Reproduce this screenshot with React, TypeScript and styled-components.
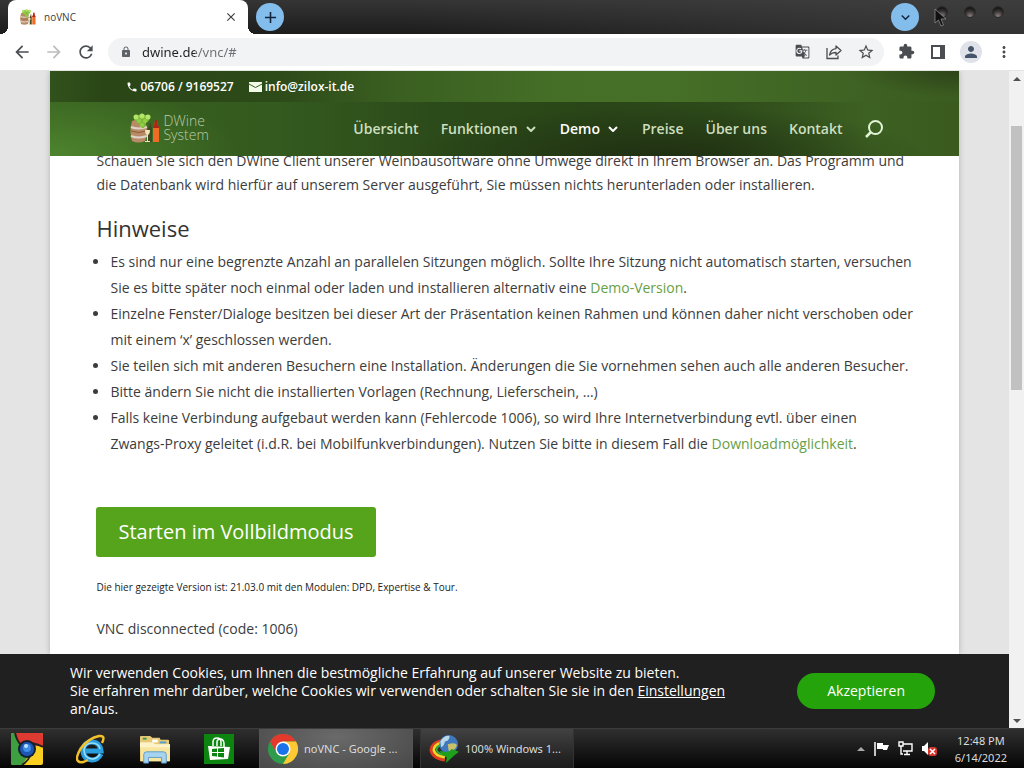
import React from "react";
import styled, { createGlobalStyle } from "styled-components";
import {
  MdArrowBack,
  MdArrowForward,
  MdRefresh,
  MdLock,
  MdGTranslate,
  MdStarBorder,
  MdExtension,
  MdPerson,
  MdMoreVert,
  MdClose,
  MdAdd,
  MdExpandMore,
  MdPhone,
} from "react-icons/md";

const GlobalStyle = createGlobalStyle`
  *, *::before, *::after { box-sizing: border-box; }
  body { margin: 0; font-family: "Open Sans", "Noto Sans", sans-serif; font-size: 14px; color: #3c3c3c; }
  button, input { font: inherit; color: inherit; }
  button { border: 0; background: none; padding: 0; cursor: pointer; }
  svg { display: block; flex: none; }
`;

const Screen = styled.div`
  display: flex;
  flex-direction: column;
  height: 100vh;
  overflow: hidden;
`;

/* ---------- Browser window ---------- */

const TitleBar = styled.div`
  display: flex;
  align-items: center;
  height: 34px;
  flex: none;
  padding: 0 8px;
  background: linear-gradient(90deg, transparent 40%, rgba(66, 66, 66, 0.6) 90%), linear-gradient(#353535, #1c1c1c);
`;

const Tab = styled.div`
  position: relative;
  display: flex;
  align-items: center;
  gap: 8px;
  align-self: stretch;
  width: 240px;
  padding: 0 10px 0 12px;
  border-radius: 8px 8px 0 0;
  background: #fff;
  color: #3c4043;
  font-size: 10px;

  &::before,
  &::after {
    content: "";
    position: absolute;
    bottom: 0;
    width: 8px;
    height: 8px;
  }
  &::before {
    right: 100%;
    background: radial-gradient(circle at 0 0, transparent 8px, #fff 8px);
  }
  &::after {
    left: 100%;
    background: radial-gradient(circle at 100% 0, transparent 8px, #fff 8px);
  }
`;

const TabTitle = styled.span`
  flex: 1;
`;

const RoundButton = styled.button`
  display: grid;
  place-items: center;
  width: 28px;
  height: 28px;
  margin-left: 8px;
  border-radius: 50%;
  background: #83bdec;
  color: #12233a;
`;

const WindowControls = styled.div`
  display: flex;
  margin-left: auto;
`;

const WindowDots = styled.div`
  position: relative;
  display: flex;
  align-self: flex-start;
  gap: 16px;
  margin: 6px 12px 0 17px;
`;

const WindowDot = styled.button`
  width: 12px;
  height: 12px;
  border-radius: 50%;
  border: 1px solid #2b2b2b;
  background: radial-gradient(circle at 50% 90%, #8a7f7f, #3b3737 45%, #1a1a1a 75%);
`;

const Pointer = styled.svg`
  position: absolute;
  left: -2px;
  top: 2px;
`;

const Toolbar = styled.div`
  display: flex;
  align-items: center;
  flex: none;
  height: 37px;
  padding: 0 10px 1px 12px;
  gap: 12px;
  background: #fff;
  border-bottom: 1px solid #e3e5e3;
`;

const IconButton = styled.button<{ $faded?: boolean }>`
  display: grid;
  place-items: center;
  width: 20px;
  height: 20px;
  color: ${(p) => (p.$faded ? "#bdbdbd" : "#4a4d51")};
`;

const AddressBar = styled.label`
  display: flex;
  align-items: center;
  flex: 1;
  height: 28px;
  gap: 10px;
  padding: 0 8px 0 12px;
  border-radius: 14px;
  background: #f1f3f4;
  color: #5f6368;
`;

const AddressInput = styled.input`
  flex: 1;
  min-width: 0;
  padding: 0;
  border: 0;
  outline: 0;
  font-family: "Noto Sans", sans-serif;
  font-size: 13px;
  color: transparent;
  background: linear-gradient(90deg, #202124 53px, #6b6f74 53px);
  background-clip: text;
  -webkit-background-clip: text;
`;

const ToolbarActions = styled.div`
  display: flex;
  align-items: center;
  gap: 12px;
`;

const Avatar = styled.button`
  display: grid;
  place-items: center;
  width: 22px;
  height: 22px;
  border-radius: 50%;
  background: #dfe2e8;
  color: #44546a;
`;

const Viewport = styled.div`
  display: flex;
  flex: 1;
  min-height: 0;
`;

const PageColumn = styled.div`
  display: flex;
  flex-direction: column;
  flex: 1;
  min-width: 0;
`;

const PageBackground = styled.div`
  flex: 1;
  min-height: 0;
  display: flex;
  justify-content: center;
  background: #e4e4e4;
  overflow: hidden;
`;

const Site = styled.div`
  display: flex;
  flex-direction: column;
  width: 90%;
  background: #fff;
  box-shadow: 0 0 6px rgba(0, 0, 0, 0.22);
`;

const ScrollTrack = styled.div`
  display: flex;
  flex-direction: column;
  width: 15px;
  flex: none;
  background: #f1f1f1;
`;

const ScrollArrow = styled.button`
  display: grid;
  place-items: center;
  height: 15px;
  flex: none;
`;

const ScrollRun = styled.div`
  flex: 1;
  padding: 40px 2px 0;
`;

const ScrollThumb = styled.div`
  height: 45%;
  background: #c1c1c1;
`;

/* ---------- Website ---------- */

const SiteHeader = styled.header`
  flex: none;
  color: #fff;
`;

const TopBar = styled.div`
  display: flex;
  align-items: center;
  gap: 15px;
  height: 31px;
  padding: 0 76px;
  font-size: 12px;
  font-weight: 600;
  background:
    radial-gradient(ellipse 110px 26px at 100% 0%, rgba(40, 58, 22, 0.7), transparent),
    linear-gradient(90deg, #31521c 0%, #2a4516 6%, #2d4a19 25%, #3a5f21 38%, #456f27 56%, #466f27 68%, #3f6424 85%, #3b5c20 100%);
`;

const ContactLink = styled.a`
  display: flex;
  align-items: center;
  gap: 2px;
  color: #fff;
  text-decoration: none;
`;

const NavBar = styled.div`
  display: flex;
  align-items: center;
  justify-content: space-between;
  height: 54px;
  padding: 0 76px 2px 80px;
  background:
    radial-gradient(ellipse 190px 70px at 0% 100%, rgba(86, 146, 52, 0.7), transparent),
    radial-gradient(ellipse 260px 50px at 68% 100%, rgba(28, 40, 16, 0.75), transparent),
    linear-gradient(90deg, #39621f 0%, #345a1f 25%, #2c4b1a 42%, #2a4618 60%, #2d4a1a 74%, #3d6122 90%, #3a5a1e 100%);
`;

const Logo = styled.a`
  display: flex;
  align-items: center;
  gap: 3px;
  color: #b9cbaa;
  font-size: 14px;
  font-weight: 300;
  line-height: 14px;
  text-decoration: none;
`;

const Nav = styled.nav`
  display: flex;
  align-items: center;
  gap: 22px;
`;

const NavLink = styled.a<{ $active?: boolean }>`
  display: flex;
  align-items: center;
  gap: 8px;
  color: ${(p) => (p.$active ? "#ffffff" : "#ccdfbf")};
  font-weight: 600;
  text-decoration: none;
`;

const SearchButton = styled.button`
  padding-top: 2px;
  color: #e2f3d6;
`;

const Article = styled.main`
  flex: 1;
  min-height: 0;
  overflow: hidden;
  padding: 0 44px 0 46px;
`;

const Intro = styled.p`
  margin: -7px 0 0;
  line-height: 24px;
`;

const Heading = styled.h2`
  margin: 19px 0 9px;
  color: #333;
  font-size: 22px;
  font-weight: 400;
  line-height: 24px;
`;

const Hints = styled.ul`
  margin: 0 0 50px;
  padding-left: 14px;
  line-height: 26px;
`;

const Unbroken = styled.span`
  white-space: nowrap;
`;

const TextLink = styled.a`
  color: #68a046;
  text-decoration: none;
`;

const StartButton = styled.button`
  display: block;
  height: 50px;
  padding: 0 22px 2px;
  border-radius: 3px;
  background: #56a31c;
  color: #fff;
  font-size: 20px;
`;

const VersionNote = styled.p`
  margin: 20px 0;
  color: #222;
  font-size: 10px;
  line-height: 20px;
`;

const Status = styled.p`
  margin: 0;
  line-height: 24px;
`;

const CookieBar = styled.section`
  display: flex;
  align-items: center;
  flex: none;
  gap: 62px;
  padding: 10px 74px 10px 70px;
  background: #202020;
  color: #fff;
`;

const CookieText = styled.p`
  flex: 1;
  margin: 0;
  line-height: 18px;
`;

const CookieLink = styled.a`
  color: inherit;
`;

const AcceptButton = styled.button`
  height: 36px;
  padding: 0 30px 2px;
  border-radius: 18px;
  background: #24a30a;
  color: #fff;
`;

/* ---------- Windows taskbar ---------- */

const Taskbar = styled.footer`
  display: flex;
  align-items: stretch;
  flex: none;
  height: 40px;
  border-top: 1px solid #3c3c3c;
  background: linear-gradient(#2f2f2f, #161616 60%, #050505);
  color: #dcdcdc;
  font-family: "Noto Sans", sans-serif;
  font-size: 11px;
`;

const Launchers = styled.div`
  display: flex;
  align-items: center;
  gap: 33px;
  padding: 0 25px 0 11px;
`;

const TaskButton = styled.button<{ $active?: boolean }>`
  display: flex;
  align-items: center;
  gap: 6px;
  width: 154px;
  margin-right: 7px;
  padding: 0 8px;
  border: 1px solid ${(p) => (p.$active ? "#555" : "#333")};
  border-width: 0 1px;
  background: ${(p) =>
    p.$active
      ? "radial-gradient(ellipse at 50% 20%, #6a6a6a, #484848)"
      : "linear-gradient(#424242, #252525 70%, #1c1c1c)"};
  white-space: nowrap;
`;

const Tray = styled.div`
  display: flex;
  align-items: center;
  gap: 9px;
  margin-left: auto;
  padding-right: 17px;
`;

const TrayButton = styled.button`
  display: block;
`;

const Clock = styled.time`
  margin-left: 9px;
  line-height: 17px;
  text-align: center;
`;

/* ---------- Drawings ---------- */

const WineLogo = ({ size }: { size: number }) => (
  <svg width={size} height={size} viewBox="0 0 30 30" aria-hidden="true">
    <path d="M2 8Q8 5 15 8Q19 18 15 28Q8 31 2 28Q-1 18 2 8Z" fill="#b98a66" />
    <path d="M1 14Q8 17 17 14M1 23Q8 26 17 23" fill="none" stroke="#ddd3c8" strokeWidth="2" />
    <path d="M1 18Q8 21 17 18" fill="none" stroke="#8d5a3a" />
    <path d="M4 3Q11 0 20 3Q20 8 16 10Q15 16 12 15Q9 13 8 10Q4 8 4 5Z" fill="#7cb83a" />
    <g fill="#b4e468">
      <circle cx="6" cy="4" r="2.500" />
      <circle cx="12" cy="3" r="2.500" />
      <circle cx="18" cy="4" r="2.500" />
    </g>
    <g fill="#93cf45">
      <circle cx="9" cy="8" r="2" />
      <circle cx="15" cy="8" r="2" />
      <circle cx="12" cy="12" r="2" />
    </g>
    <path d="M18 15Q20 14 20 10H21Q21 14 22 15V29H18Z" fill="#3e4a1f" />
    <path d="M15 17H20Q20 21 18 22V28H20V29H15V28H17V22Q15 21 15 17Z" fill="#efe6b8" />
    <path d="M23 29V14Q25 12 25 7H27Q27 12 29 14V29Z" fill="#ee6c24" />
    <path d="M23 15V14Q25 12 25 7H27Q27 12 29 14V15Z" fill="#b02418" />
  </svg>
);

const ShareIcon = () => (
  <svg width="18" height="18" viewBox="0 0 18 18" fill="none" stroke="currentColor" strokeWidth="1.300" aria-hidden="true">
    <path d="M2 5V15.500H13V12.500" />
    <path d="M11 3L16 7.500L11 12V9.500Q7 9.300 4.500 12Q5.500 6.300 11 5.600Z" strokeLinejoin="round" />
  </svg>
);

const SidePanelIcon = () => (
  <svg width="14" height="14" viewBox="0 0 14 14" aria-hidden="true">
    <path fillRule="evenodd" d="M0 0H14V14H0ZM2 2V12H9V2Z" fill="currentColor" />
  </svg>
);

const EnvelopeIcon = () => (
  <svg width="14" height="10" viewBox="0 0 14 10" aria-hidden="true">
    <path d="M0 0H13V10H0Z" fill="#f2fae9" />
    <path d="M0 2L6.500 5.500L13 2" fill="none" stroke="#3a5a26" strokeWidth="1" />
  </svg>
);

const ChevronIcon = () => (
  <svg width="12" height="8" viewBox="0 0 12 8" fill="none" stroke="currentColor" strokeWidth="2" aria-hidden="true">
    <path d="M1 3L5 7L9 3" />
  </svg>
);

const SearchIcon = () => (
  <svg width="18" height="18" viewBox="0 0 18 18" fill="none" stroke="currentColor" aria-hidden="true">
    <circle cx="10.500" cy="7.500" r="6.500" strokeWidth="2" />
    <path d="M6 12L1 17" strokeWidth="2.500" />
  </svg>
);

const OldChromeIcon = () => (
  <svg width="32" height="32" viewBox="0 0 32 32" aria-hidden="true">
    <rect width="32" height="32" rx="2" fill="#f9cf22" />
    <path d="M5 0H30Q32 0 32 2V13H20L10 14L3 2Z" fill="#dd3a31" />
    <path d="M0 2Q0 0 2 0H4Q7 8 10 16L18 22L11 32H2Q0 32 0 30Z" fill="#3f9e3f" />
    <path d="M4 0Q6 8 10 12M32 14Q27 11 20 10M11 32Q17 28 19 23" fill="none" stroke="#222" strokeWidth="2" />
    <circle cx="16" cy="16" r="9" fill="#14202f" />
    <circle cx="16" cy="16" r="7" fill="#1c56b4" />
    <circle cx="16" cy="15" r="4" fill="#3f8ee6" />
    <circle cx="15" cy="13" r="2" fill="#bfe2ff" />
  </svg>
);

const ExplorerIcon = () => (
  <svg width="30" height="30" viewBox="0 0 30 30" fill="none" aria-hidden="true">
    <path d="M25 20Q22 26 16 26Q7 25 7 16Q8 8 16 8Q24 8 25 17H8" stroke="#2a9fe0" strokeWidth="5" />
    <path d="M24 20Q21 25 16 25Q8 24 8 16Q9 9 16 9Q23 9 24 15" stroke="#9be0fb" strokeWidth="1.500" />
    <path d="M26 9Q30 1 23 2Q13 4 5 14Q-1 24 2 27Q5 30 12 26" stroke="#f3c02c" strokeWidth="2.500" />
  </svg>
);

const FolderIcon = () => (
  <svg width="32" height="30" viewBox="0 0 34 32" aria-hidden="true">
    <path d="M1 3Q1 2 2 2H12L14 4H22L23 6H31Q32 6 32 7V29H1Z" fill="#e5c978" />
    <path d="M4 4H8V6H4Z" fill="#3b9b48" />
    <path d="M14 6H20V9H14Z" fill="#fff" />
    <path d="M22 8H29V10H22Z" fill="#4ba0dc" />
    <path d="M1 9H15L17 11H33V29H2Z" fill="#f8e6a0" />
    <path d="M1 9H15L17 11H33V14H1Z" fill="#fdf3c8" />
    <path d="M5 31V22Q5 19 8 19H26Q29 19 29 22V31H24V25H10V31Z" fill="#a7d3ee" stroke="#5b9cc9" />
  </svg>
);

const StoreIcon = () => (
  <svg width="30" height="30" viewBox="0 0 30 30" aria-hidden="true">
    <rect width="30" height="30" fill="#0b8510" />
    <path d="M9 12V8Q9 4 13 4Q17 4 17 8V12M13 12V8Q13 5 17 5Q20 6 20 10V13" fill="none" stroke="#fff" strokeWidth="1.500" />
    <path d="M4 12L26 13L24 25L6 26Z" fill="#fff" />
    <path d="M8 15L13 14.500V18H8ZM14 14.400L20 14V18H14ZM8 19H13V22.500L8 22ZM14 19H20V23.500L14 22.700Z" fill="#0b8510" />
  </svg>
);

const ChromeIcon = () => (
  <svg width="30" height="30" viewBox="0 0 30 30" aria-hidden="true">
    <circle cx="15" cy="15" r="15" fill="#2e9c4b" />
    <path d="M2 7.500A15 15 0 0 1 28 7.500H15L8.500 18.750Z" fill="#e3392c" />
    <path d="M28 7.500A15 15 0 0 1 15 30L21.500 18.750L15 7.500Z" fill="#fcc934" />
    <circle cx="15" cy="15" r="7.500" fill="#fff" />
    <circle cx="15" cy="15" r="6" fill="#1a73e8" />
  </svg>
);

const DownloadManagerIcon = () => (
  <svg width="30" height="28" viewBox="0 0 32 30" fill="none" aria-hidden="true">
    <path d="M13 6Q2 9 2 16Q3 25 17 27" stroke="#e23b23" strokeWidth="3" />
    <path d="M13 8Q5 11 5 16Q6 22 17 24" stroke="#f5d327" strokeWidth="3" />
    <path d="M13 11Q8 12 8 16Q9 20 17 21" stroke="#2fae3c" strokeWidth="2" />
    <circle cx="21" cy="10" r="10" fill="#3f78bd" />
    <path d="M12 7Q16 0 22 1Q22 6 17 7Q16 12 13 13Z" fill="#b9d8e8" />
    <path d="M20 10Q28 7 30 11Q27 18 21 17Z" fill="#c9c06a" />
    <path d="M11 17Q21 20 24 15L32 18L27 22L18 30L19 24Q14 22 11 17Z" fill="#1fa01c" />
  </svg>
);

const FlagIcon = () => (
  <svg width="15" height="15" viewBox="0 0 15 15" aria-hidden="true">
    <path d="M1 1V15" stroke="#fff" strokeWidth="1.500" />
    <path d="M3 2H9V4H15Q14 6 13 9H9V8H3Z" fill="#fff" />
  </svg>
);

const NetworkIcon = () => (
  <svg width="15" height="15" viewBox="0 0 15 15" fill="none" stroke="#fff" strokeWidth="1.400" aria-hidden="true">
    <path d="M5 3H14V10H5M9 10V13M6 13.500H12M3 5V13H5M1 1H5V5H1Z" />
  </svg>
);

const MutedIcon = () => (
  <svg width="15" height="15" viewBox="0 0 15 15" aria-hidden="true">
    <path d="M0 5H2L6 1V14L2 10H0Z" fill="#fff" />
    <rect x="6" y="6" width="9" height="9" rx="3" fill="#d8332b" />
    <path d="M8 8L13 13M13 8L8 13" stroke="#fff" strokeWidth="1.500" />
  </svg>
);

const Triangle = ({ up, color = "#505050" }: { up?: boolean; color?: string }) => (
  <svg width="8" height="4" viewBox="0 0 8 4" aria-hidden="true">
    <path d={up ? "M0 4L4 0L8 4Z" : "M0 0L4 4L8 0Z"} fill={color} />
  </svg>
);

/* ---------- Screen ---------- */

const menu = [
  { label: "Übersicht" },
  { label: "Funktionen", sub: true },
  { label: "Demo", sub: true, active: true },
  { label: "Preise" },
  { label: "Über uns" },
  { label: "Kontakt" },
];

export default function App() {
  return (
    <Screen>
      <GlobalStyle />
      <TitleBar>
        <Tab>
          <WineLogo size={16} />
          <TabTitle>noVNC</TabTitle>
          <button aria-label="Close tab"><MdClose size={14} /></button>
        </Tab>
        <RoundButton aria-label="New tab"><MdAdd size={19} /></RoundButton>
        <WindowControls>
          <RoundButton aria-label="Search tabs"><MdExpandMore size={17} /></RoundButton>
        </WindowControls>
        <WindowDots>
          <WindowDot aria-label="Minimize" />
          <WindowDot aria-label="Maximize" />
          <WindowDot aria-label="Close" />
          <Pointer width="13" height="19" viewBox="0 0 13 19" aria-hidden="true">
            <path d="M1 1V15L4.500 12L7 18L9.500 17L7 11H12Z" fill="#111" stroke="#8c8c8c" strokeWidth="0.800" />
          </Pointer>
        </WindowDots>
      </TitleBar>

      <Toolbar>
        <IconButton aria-label="Back"><MdArrowBack size={20} /></IconButton>
        <IconButton aria-label="Forward" $faded><MdArrowForward size={20} /></IconButton>
        <IconButton aria-label="Reload"><MdRefresh size={20} /></IconButton>
        <AddressBar>
          <MdLock size={12} />
          <AddressInput aria-label="Address" defaultValue="dwine.de/vnc/#" />
          <ToolbarActions>
            <IconButton aria-label="Translate"><MdGTranslate size={15} /></IconButton>
            <IconButton aria-label="Share"><ShareIcon /></IconButton>
            <IconButton aria-label="Bookmark"><MdStarBorder size={18} /></IconButton>
          </ToolbarActions>
        </AddressBar>
        <ToolbarActions>
          <IconButton aria-label="Extensions"><MdExtension size={17} /></IconButton>
          <IconButton aria-label="Side panel"><SidePanelIcon /></IconButton>
          <Avatar aria-label="Profile"><MdPerson size={18} /></Avatar>
          <IconButton aria-label="Menu"><MdMoreVert size={18} /></IconButton>
        </ToolbarActions>
      </Toolbar>

      <Viewport>
        <PageColumn>
          <PageBackground>
            <Site>
              <SiteHeader>
                <TopBar>
                  <ContactLink href="#tel"><MdPhone size={12} />06706 / 9169527</ContactLink>
                  <ContactLink href="#mail"><EnvelopeIcon />info@zilox-it.de</ContactLink>
                </TopBar>
                <NavBar>
                  <Logo href="#home">
                    <WineLogo size={30} />
                    <span>DWine<br />System</span>
                  </Logo>
                  <Nav>
                    {menu.map((m) => (
                      <NavLink key={m.label} href="#" $active={m.active}>
                        {m.label}
                        {m.sub && <ChevronIcon />}
                      </NavLink>
                    ))}
                    <SearchButton aria-label="Suche"><SearchIcon /></SearchButton>
                  </Nav>
                </NavBar>
              </SiteHeader>
              <Article>
                <Intro>
                  Schauen Sie sich den DWine Client unserer Weinbausoftware ohne Umwege direkt in Ihrem Browser an. Das
                  Programm und die Datenbank wird hierfür auf unserem Server ausgeführt, Sie müssen nichts herunterladen
                  oder installieren.
                </Intro>
                <Heading>Hinweise</Heading>
                <Hints>
                  <li>
                    Es sind nur eine begrenzte Anzahl an parallelen Sitzungen möglich. Sollte Ihre Sitzung nicht
                    automatisch starten, versuchen Sie es bitte später noch einmal oder laden und installieren alternativ
                    eine <TextLink href="#demo">Demo-Version</TextLink>.
                  </li>
                  <li>
                    Einzelne Fenster/Dialoge besitzen bei dieser Art der Präsentation keinen Rahmen und können daher
                    nicht verschoben oder mit einem ‘x’ geschlossen werden.
                  </li>
                  <li>
                    Sie teilen sich mit anderen Besuchern eine Installation. Änderungen die Sie vornehmen sehen auch alle
                    anderen Besucher.
                  </li>
                  <li>Bitte ändern Sie nicht die installierten Vorlagen (Rechnung, Lieferschein, …)</li>
                  <li>
                    Falls keine Verbindung aufgebaut werden kann (Fehlercode 1006), so wird Ihre Internetverbindung evtl.
                    über einen <Unbroken>Zwangs-Proxy</Unbroken> geleitet (i.d.R. bei Mobilfunkverbindungen). Nutzen Sie
                    bitte in diesem Fall die <TextLink href="#download">Downloadmöglichkeit</TextLink>.
                  </li>
                </Hints>
                <StartButton>Starten im Vollbildmodus</StartButton>
                <VersionNote>
                  Die hier gezeigte Version ist: 21.03.0 mit den Modulen: DPD, Expertise &amp; Tour.
                </VersionNote>
                <Status>VNC disconnected (code: 1006)</Status>
              </Article>
            </Site>
          </PageBackground>
          <CookieBar>
            <CookieText>
              Wir verwenden Cookies, um Ihnen die bestmögliche Erfahrung auf unserer Website zu bieten.
              <br />
              Sie erfahren mehr darüber, welche Cookies wir verwenden oder schalten Sie sie in den{" "}
              <CookieLink href="#settings">Einstellungen</CookieLink> an/aus.
            </CookieText>
            <AcceptButton>Akzeptieren</AcceptButton>
          </CookieBar>
        </PageColumn>
        <ScrollTrack>
          <ScrollArrow aria-label="Scroll up"><Triangle up /></ScrollArrow>
          <ScrollRun><ScrollThumb /></ScrollRun>
          <ScrollArrow aria-label="Scroll down"><Triangle /></ScrollArrow>
        </ScrollTrack>
      </Viewport>

      <Taskbar>
        <Launchers>
          <button aria-label="Chrome"><OldChromeIcon /></button>
          <button aria-label="Internet Explorer"><ExplorerIcon /></button>
          <button aria-label="File Explorer"><FolderIcon /></button>
          <button aria-label="Store"><StoreIcon /></button>
        </Launchers>
        <TaskButton $active><ChromeIcon />noVNC - Google ...</TaskButton>
        <TaskButton><DownloadManagerIcon />100% Windows 1...</TaskButton>
        <Tray>
          <TrayButton aria-label="Show hidden icons"><Triangle up color="#a8a8a8" /></TrayButton>
          <TrayButton aria-label="Action center"><FlagIcon /></TrayButton>
          <TrayButton aria-label="Network"><NetworkIcon /></TrayButton>
          <TrayButton aria-label="Volume"><MutedIcon /></TrayButton>
          <Clock>12:48 PM<br />6/14/2022</Clock>
        </Tray>
      </Taskbar>
    </Screen>
  );
}
